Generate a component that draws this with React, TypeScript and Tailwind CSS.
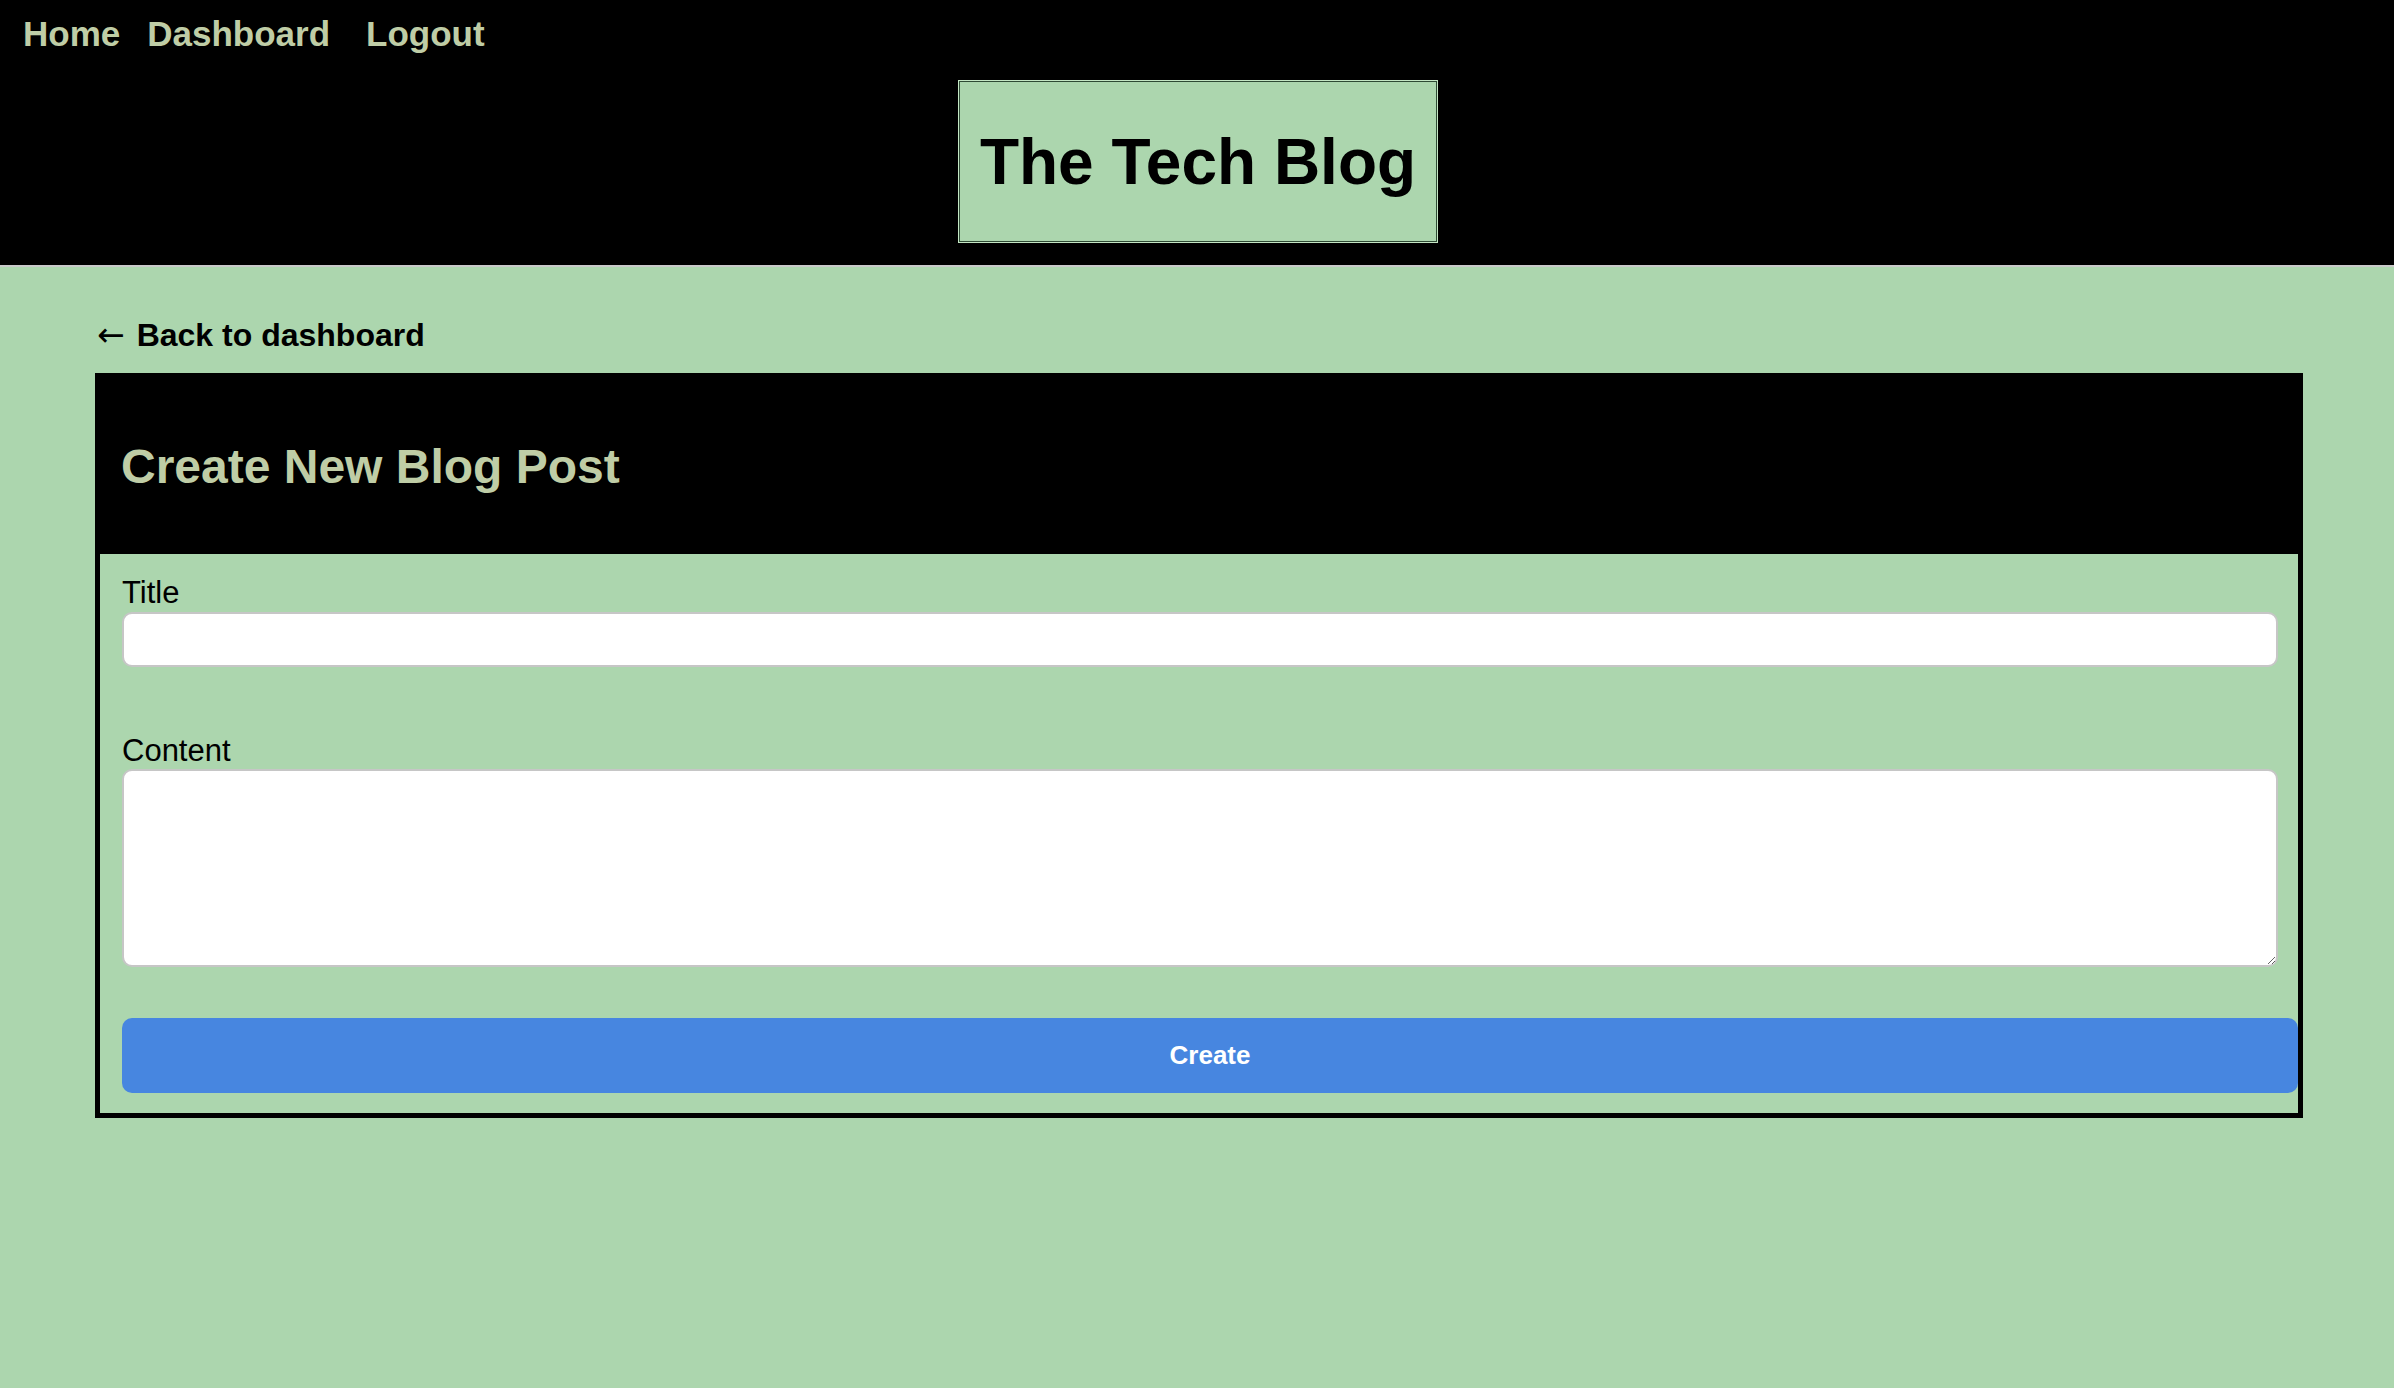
export default function App() {
    return (
        <div className="min-h-screen bg-[#acd6ae] font-['Liberation_Sans',Arial,sans-serif] text-black">
            {/* top bar */}
            <header className="bg-black pt-[14px] pb-[22px] border-b-2 border-[#c9c9c9]">
                <nav className="flex items-center text-[35px] font-bold leading-[40px] text-[#bfcda6]">
                    <a href="#" className="ml-[23px]">Home</a>
                    <a href="#" className="ml-[27px]">Dashboard</a>
                    <a href="#" className="ml-[36px]">Logout</a>
                </nav>
                <div className="mt-[26px] flex justify-center">
                    <div className="ml-[2px] w-[480px] h-[163px] flex items-center justify-center bg-[#acd6ae] border border-[#c4e6c4] shadow-[inset_0_0_0_1px_#2e4a34]">
                        <h1 className="text-[64px] font-bold leading-[74px] text-black">The Tech Blog</h1>
                    </div>
                </div>
            </header>

            <main className="pt-[50px] pl-[95px] pr-[91px]">
                <a href="#" className="flex items-center text-[32px] font-bold leading-[37px] mb-[19px]">
                    <span className="ml-[2px] font-['DejaVu_Sans',sans-serif] font-normal text-[33px] mr-[12px] mt-[-3px]">←</span>
                    Back to dashboard
                </a>

                <section className="border-[5px] border-black">
                    <div className="bg-black h-[176px] flex items-center px-[21px]">
                        <h2 className="text-[48px] font-bold leading-[55px] text-[#bfcda6]">Create New Blog Post</h2>
                    </div>
                    <form className="pl-[22px] pt-[21px] pb-[20px]" onSubmit={(e) => e.preventDefault()}>
                        <label className="block text-[31px] leading-[36px]">Title</label>
                        <input
                            type="text"
                            className="block mt-[1px] mr-[20px] w-[calc(100%-20px)] h-[55px] bg-white border-2 border-[#c6c6c6] rounded-[10px] outline-none"
                        />
                        <label className="block mt-[66px] text-[31px] leading-[36px]">Content</label>
                        <textarea className="block w-[calc(100%-20px)] h-[198px] bg-white border-2 border-[#c6c6c6] rounded-[10px] outline-none" />
                        <button
                            type="submit"
                            className="block mt-[51px] w-full h-[75px] rounded-[10px] bg-[#4786e0] text-white text-[26px] font-bold"
                        >
                            Create
                        </button>
                    </form>
                </section>
            </main>
        </div>
    );
}
